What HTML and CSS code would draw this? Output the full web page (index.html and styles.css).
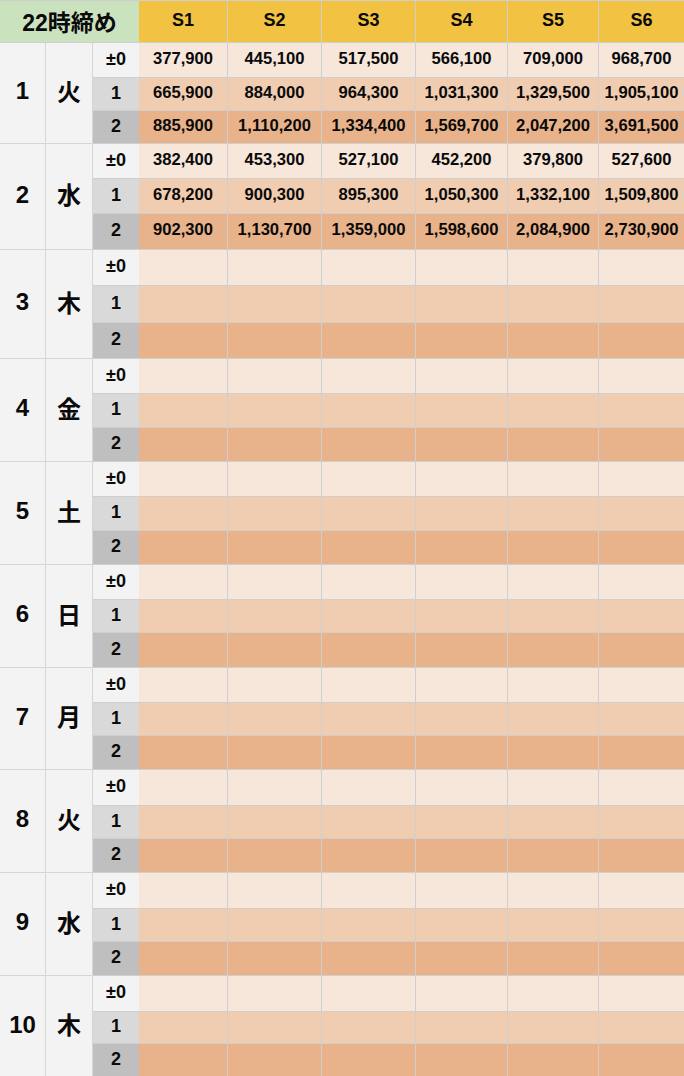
FILE: index.html
```html
<!DOCTYPE html>
<html lang="ja">
<head>
<meta charset="utf-8">
<title>22時締め</title>
<link rel="stylesheet" href="styles.css">
</head>
<body>
<div class="sheet">
  <div class="c title">22時締め</div>
  <div class="c hdr">S1</div><div class="c hdr">S2</div><div class="c hdr">S3</div><div class="c hdr">S4</div><div class="c hdr">S5</div><div class="c hdr">S6</div>

  <div class="c day">1</div><div class="c wd">火</div>
  <div class="c sub s0">±0</div><div class="c d0">377,900</div><div class="c d0">445,100</div><div class="c d0">517,500</div><div class="c d0">566,100</div><div class="c d0">709,000</div><div class="c d0">968,700</div>
  <div class="c sub s1">1</div><div class="c d1">665,900</div><div class="c d1">884,000</div><div class="c d1">964,300</div><div class="c d1">1,031,300</div><div class="c d1">1,329,500</div><div class="c d1">1,905,100</div>
  <div class="c sub s2">2</div><div class="c d2">885,900</div><div class="c d2">1,110,200</div><div class="c d2">1,334,400</div><div class="c d2">1,569,700</div><div class="c d2">2,047,200</div><div class="c d2">3,691,500</div>

  <div class="c day">2</div><div class="c wd">水</div>
  <div class="c sub s0">±0</div><div class="c d0">382,400</div><div class="c d0">453,300</div><div class="c d0">527,100</div><div class="c d0">452,200</div><div class="c d0">379,800</div><div class="c d0">527,600</div>
  <div class="c sub s1">1</div><div class="c d1">678,200</div><div class="c d1">900,300</div><div class="c d1">895,300</div><div class="c d1">1,050,300</div><div class="c d1">1,332,100</div><div class="c d1">1,509,800</div>
  <div class="c sub s2">2</div><div class="c d2">902,300</div><div class="c d2">1,130,700</div><div class="c d2">1,359,000</div><div class="c d2">1,598,600</div><div class="c d2">2,084,900</div><div class="c d2">2,730,900</div>

  <div class="c day">3</div><div class="c wd">木</div>
  <div class="c sub s0">±0</div><div class="c d0"></div><div class="c d0"></div><div class="c d0"></div><div class="c d0"></div><div class="c d0"></div><div class="c d0"></div>
  <div class="c sub s1">1</div><div class="c d1"></div><div class="c d1"></div><div class="c d1"></div><div class="c d1"></div><div class="c d1"></div><div class="c d1"></div>
  <div class="c sub s2">2</div><div class="c d2"></div><div class="c d2"></div><div class="c d2"></div><div class="c d2"></div><div class="c d2"></div><div class="c d2"></div>

  <div class="c day">4</div><div class="c wd">金</div>
  <div class="c sub s0">±0</div><div class="c d0"></div><div class="c d0"></div><div class="c d0"></div><div class="c d0"></div><div class="c d0"></div><div class="c d0"></div>
  <div class="c sub s1">1</div><div class="c d1"></div><div class="c d1"></div><div class="c d1"></div><div class="c d1"></div><div class="c d1"></div><div class="c d1"></div>
  <div class="c sub s2">2</div><div class="c d2"></div><div class="c d2"></div><div class="c d2"></div><div class="c d2"></div><div class="c d2"></div><div class="c d2"></div>

  <div class="c day">5</div><div class="c wd">土</div>
  <div class="c sub s0">±0</div><div class="c d0"></div><div class="c d0"></div><div class="c d0"></div><div class="c d0"></div><div class="c d0"></div><div class="c d0"></div>
  <div class="c sub s1">1</div><div class="c d1"></div><div class="c d1"></div><div class="c d1"></div><div class="c d1"></div><div class="c d1"></div><div class="c d1"></div>
  <div class="c sub s2">2</div><div class="c d2"></div><div class="c d2"></div><div class="c d2"></div><div class="c d2"></div><div class="c d2"></div><div class="c d2"></div>

  <div class="c day">6</div><div class="c wd">日</div>
  <div class="c sub s0">±0</div><div class="c d0"></div><div class="c d0"></div><div class="c d0"></div><div class="c d0"></div><div class="c d0"></div><div class="c d0"></div>
  <div class="c sub s1">1</div><div class="c d1"></div><div class="c d1"></div><div class="c d1"></div><div class="c d1"></div><div class="c d1"></div><div class="c d1"></div>
  <div class="c sub s2">2</div><div class="c d2"></div><div class="c d2"></div><div class="c d2"></div><div class="c d2"></div><div class="c d2"></div><div class="c d2"></div>

  <div class="c day">7</div><div class="c wd">月</div>
  <div class="c sub s0">±0</div><div class="c d0"></div><div class="c d0"></div><div class="c d0"></div><div class="c d0"></div><div class="c d0"></div><div class="c d0"></div>
  <div class="c sub s1">1</div><div class="c d1"></div><div class="c d1"></div><div class="c d1"></div><div class="c d1"></div><div class="c d1"></div><div class="c d1"></div>
  <div class="c sub s2">2</div><div class="c d2"></div><div class="c d2"></div><div class="c d2"></div><div class="c d2"></div><div class="c d2"></div><div class="c d2"></div>

  <div class="c day">8</div><div class="c wd">火</div>
  <div class="c sub s0">±0</div><div class="c d0"></div><div class="c d0"></div><div class="c d0"></div><div class="c d0"></div><div class="c d0"></div><div class="c d0"></div>
  <div class="c sub s1">1</div><div class="c d1"></div><div class="c d1"></div><div class="c d1"></div><div class="c d1"></div><div class="c d1"></div><div class="c d1"></div>
  <div class="c sub s2">2</div><div class="c d2"></div><div class="c d2"></div><div class="c d2"></div><div class="c d2"></div><div class="c d2"></div><div class="c d2"></div>

  <div class="c day">9</div><div class="c wd">水</div>
  <div class="c sub s0">±0</div><div class="c d0"></div><div class="c d0"></div><div class="c d0"></div><div class="c d0"></div><div class="c d0"></div><div class="c d0"></div>
  <div class="c sub s1">1</div><div class="c d1"></div><div class="c d1"></div><div class="c d1"></div><div class="c d1"></div><div class="c d1"></div><div class="c d1"></div>
  <div class="c sub s2">2</div><div class="c d2"></div><div class="c d2"></div><div class="c d2"></div><div class="c d2"></div><div class="c d2"></div><div class="c d2"></div>

  <div class="c day">10</div><div class="c wd">木</div>
  <div class="c sub s0">±0</div><div class="c d0"></div><div class="c d0"></div><div class="c d0"></div><div class="c d0"></div><div class="c d0"></div><div class="c d0"></div>
  <div class="c sub s1">1</div><div class="c d1"></div><div class="c d1"></div><div class="c d1"></div><div class="c d1"></div><div class="c d1"></div><div class="c d1"></div>
  <div class="c sub s2">2</div><div class="c d2"></div><div class="c d2"></div><div class="c d2"></div><div class="c d2"></div><div class="c d2"></div><div class="c d2"></div>
</div>
</body>
</html>
```
FILE: styles.css
```css
html, body {
  margin: 0;
  padding: 0;
  background: #ffffff;
  overflow: hidden;
}

.sheet {
  display: grid;
  grid-template-columns: 46px 47px 46px 89px 94px 94px 92px 91px 86px;
  grid-template-rows:
    42px
    35px 33px 33px
    35px 35px 36px
    36px 37px 36px
    35px 34px 34px
    35px 34px 34px
    35px 33px 35px
    35px 33px 34px
    36px 33px 34px
    36px 33px 34px
    36px 32px 34px;
  border-top: 1px solid #cfcfcf;
  width: 685px;
  font-family: "Liberation Sans", Arial, "Noto Sans CJK JP", sans-serif;
  font-weight: bold;
  color: #0a0a0a;
}

.c {
  box-sizing: border-box;
  border-right: 1px solid #cfcfcf;
  border-bottom: 1px solid #cfcfcf;
  display: flex;
  align-items: center;
  justify-content: center;
  font-size: 16.6px;
  padding-bottom: 3px;
  white-space: nowrap;
  overflow: hidden;
}

.title {
  grid-column: span 3;
  background: #cbe2be;
  font-size: 23px;
  border-right: none;
  padding-bottom: 2px;
}

.hdr {
  background: #f2c343;
  font-size: 18px;
  padding-bottom: 2px;
}

.day,
.wd {
  grid-row: span 3;
  background: #f3f3f3;
  border-right-color: #d6d6d6;
  border-bottom-color: #d6d6d6;
  font-size: 24px;
  padding-bottom: 4px;
}

.wd {
  font-family: "Noto Sans CJK JP", sans-serif;
  font-size: 24px;
  padding-bottom: 6px;
}

.sub {
  border-right: none;
  font-size: 18px;
  padding-bottom: 2px;
}

.s0 { background: #f3f3f3; }
.s1 { background: #d9d9d9; }
.s2 { background: #bfbfbf; }

.d0 { background: #f7e6da; }
.d1 { background: #f0cdb1; }
.d2 { background: #e8b38a; }
```
